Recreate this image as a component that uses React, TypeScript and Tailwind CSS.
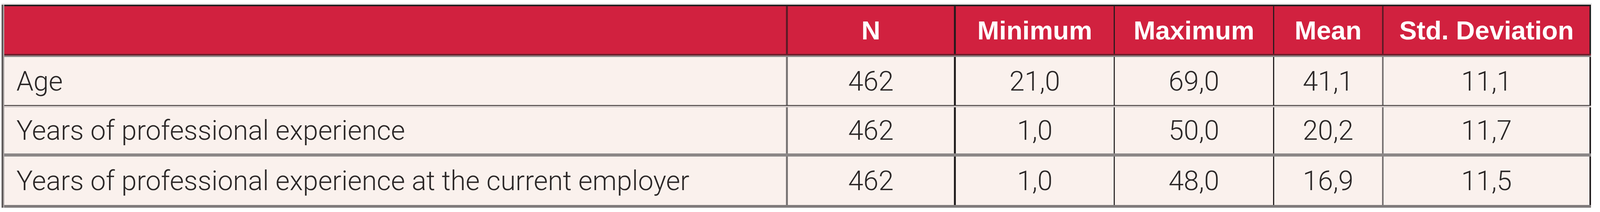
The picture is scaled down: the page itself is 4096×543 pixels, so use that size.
import React from 'react';

type Row = { label: string; n: string; min: string; max: string; mean: string; sd: string };

const rows: Row[] = [
  { label: 'Age', n: '462', min: '21,0', max: '69,0', mean: '41,1', sd: '11,1' },
  { label: 'Years of professional experience', n: '462', min: '1,0', max: '50,0', mean: '20,2', sd: '11,7' },
  { label: 'Years of professional experience at the current employer', n: '462', min: '1,0', max: '48,0', mean: '16,9', sd: '11,5' },
];

const bodyFont = { fontFamily: 'Roboto, "Liberation Sans", sans-serif' };
const headFont = { fontFamily: '"Liberation Sans", Arial, sans-serif' };

// row heights and separators, top to bottom
const rowStyles = [
  { h: 'h-[123px]', sep: <div className="h-[6px] flex flex-col"><div className="h-[2px] bg-[#3a3434]" /><div className="h-[4px] bg-[#cfc7c6]" /></div> },
  { h: 'h-[118px]', sep: <div className="h-[8px] bg-[#8b8787]" /> },
  { h: 'h-[124px]', sep: <div className="h-[7px] bg-[#7f7b7b]" /> },
];

export default function App() {
  return (
    <div className="w-[4096px] h-[543px] bg-white pt-[8px] pl-[4px]">
      <div className="w-[4071px] h-[4px] bg-[#e8e8e8]" />
      <div className="w-[4069px] border-l-[4px] border-[#5b5757]">
        <div className="border-l-[3px] border-[#aaa4a3]">
          {/* header */}
          <div className="border-t-[4px] border-[#231f20]">
            <div className="flex h-[122px] bg-[#d1213f] text-white font-bold text-[67px] leading-none" style={headFont}>
              <div className="w-[2006px] border-r-[5px] border-[#5e1b26]" />
              <div className="w-[430px] border-r-[5px] border-[#2a1a1e] flex items-center justify-center">N</div>
              <div className="w-[407px] border-r-[3px] border-[#2a1a1e] flex items-center justify-center">Minimum</div>
              <div className="w-[408px] border-r-[3px] border-[#2a1a1e] flex items-center justify-center">Maximum</div>
              <div className="w-[280px] border-r-[4px] border-[#5e1b26] flex items-center justify-center">Mean</div>
              <div className="w-[531px] border-r-[4px] border-[#231f20] flex items-center justify-center">Std. Deviation</div>
            </div>
            <div className="h-[4px] bg-[#6f1d2a]" />
            <div className="h-[4px] bg-[#8c8888]" />
          </div>

          {/* body */}
          {rows.map((r, i) => (
            <div key={r.label}>
              <div className={`flex ${rowStyles[i].h} bg-[#faf1ed] text-[#2b2727] font-light text-[70px] leading-none`} style={bodyFont}>
                <div className="w-[2006px] border-r-[5px] border-[#7a7575] flex items-center pl-[31px]">{r.label}</div>
                <div className="w-[430px] border-r-[5px] border-[#231f20] flex items-center justify-center">{r.n}</div>
                <div className="w-[407px] border-r-[3px] border-[#333030] flex items-center justify-center">{r.min}</div>
                <div className="w-[408px] border-r-[3px] border-[#231f20] flex items-center justify-center">{r.max}</div>
                <div className="w-[280px] border-r-[4px] border-[#777272] flex items-center justify-center">{r.mean}</div>
                <div className="w-[531px] border-r-[4px] border-[#231f20] flex items-center justify-center">{r.sd}</div>
              </div>
              {rowStyles[i].sep}
            </div>
          ))}
        </div>
      </div>
    </div>
  );
}
